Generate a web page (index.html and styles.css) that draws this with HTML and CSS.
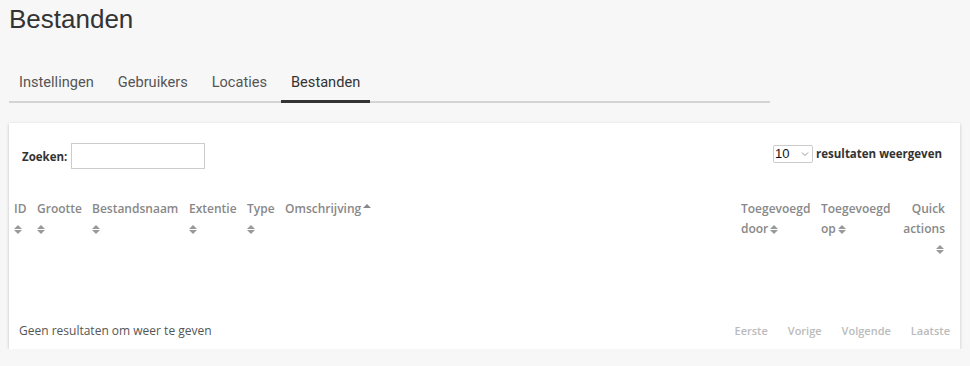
FILE: index.html
```html
<!DOCTYPE html>
<html lang="nl">
<head>
<meta charset="utf-8">
<title>Bestanden</title>
<link rel="stylesheet" href="styles.css">
</head>
<body>
<div class="page">
  <h1 class="title">Bestanden</h1>
  <nav class="tabs">
    <a class="tab">Instellingen</a>
    <a class="tab">Gebruikers</a>
    <a class="tab">Locaties</a>
    <a class="tab active">Bestanden</a>
  </nav>
  <section class="card">
    <div class="toolbar">
      <label class="search">Zoeken: <input type="text" class="search-input"></label>
      <label class="length">
        <span class="select"><span>10</span><svg class="chev" width="8" height="6" viewBox="0 0 8 6"><path d="M1 1.5 L4 4.5 L7 1.5" fill="none" stroke="#999" stroke-width="1"/></svg></span>
        resultaten weergeven
      </label>
    </div>
    <table class="grid">
      <thead>
        <tr>
          <th class="c-id">ID <span class="sort"></span></th>
          <th class="c-size">Grootte <span class="sort"></span></th>
          <th class="c-name">Bestandsnaam <span class="sort"></span></th>
          <th class="c-ext">Extentie <span class="sort"></span></th>
          <th class="c-type">Type <span class="sort"></span></th>
          <th class="c-desc">Omschrijving<span class="sort-up"></span></th>
          <th class="c-by">Toegevoegd door<span class="sort inline"></span></th>
          <th class="c-on">Toegevoegd op<span class="sort inline"></span></th>
          <th class="c-qa">Quick actions <span class="sort"></span></th>
        </tr>
      </thead>
    </table>
    <div class="footer">
      <span class="info">Geen resultaten om weer te geven</span>
      <div class="pager">
        <span>Eerste</span><span>Vorige</span><span>Volgende</span><span>Laatste</span>
      </div>
    </div>
  </section>
</div>
</body>
</html>
```

FILE: styles.css
```css
html, body {
  margin: 0;
  padding: 0;
  background: #f7f7f7;
}
body {
  font-family: "Open Sans", "Liberation Sans", sans-serif;
  color: #333;
}
.page {
  padding: 0 10px 0 9px;
}
.title {
  margin: 0;
  padding-top: 4px;
  font-family: "Liberation Sans", Arial, sans-serif;
  font-weight: 400;
  font-size: 26px;
  line-height: 30px;
  color: #333;
}
.tabs {
  margin-top: 34px;
  width: 761px;
  display: flex;
  border-bottom: 2px solid #d4d4d4;
  height: 33px;
}
.tab {
  font-family: "Roboto", "Open Sans", sans-serif;
  font-size: 14.6px;
  color: #555;
  padding: 4px 10px 0;
  margin-right: 4px;
  line-height: 20px;
  height: 28px;
  box-sizing: content-box;
}
.tab.active {
  color: #333;
  border-bottom: 3px solid #333;
  margin-bottom: -2px;
}
.card {
  margin-top: 20px;
  background: #fff;
  box-shadow: 0 1px 3px rgba(0,0,0,0.22);
  height: 226px;
  width: 951px;
  box-sizing: border-box;
  padding: 0 10px 0 5px;
  display: flex;
  flex-direction: column;
}
.toolbar {
  display: flex;
  justify-content: space-between;
  align-items: center;
  padding: 20px 8px 0 8px;
  font-size: 11.5px;
  font-weight: 700;
  color: #333;
}
.search {
  display: flex;
  align-items: center;
  gap: 4px;
}
.search-input {
  width: 134px;
  height: 26px;
  box-sizing: border-box;
  border: 1px solid #ccc;
  margin: 0;
  padding: 0;
}
.length {
  display: flex;
  align-items: center;
  gap: 3px;
  margin-top: -5px;
}
.select {
  width: 40px;
  height: 18px;
  box-sizing: border-box;
  border: 1px solid #ccc;
  border-radius: 2px;
  display: flex;
  align-items: center;
  justify-content: space-between;
  padding: 0 3px 0 1px;
  font-family: "Liberation Sans", Arial, sans-serif;
  font-weight: 400;
  font-size: 13px;
  color: #111;
}
.grid {
  margin-top: 30px;
  width: calc(100% - 5px);
  border-collapse: collapse;
  font-size: 12px;
}
.grid th {
  font-weight: 600;
  color: #888;
  text-align: left;
  vertical-align: top;
  line-height: 20px;
  padding: 0;
}
.c-id { width: 23px; }
.c-size { width: 55px; }
.c-name { width: 97px; }
.c-ext { width: 58px; }
.c-type { width: 38px; }
.c-desc { width: auto; }
.c-by { width: 80px; }
.c-on { width: 80px; }
.grid th.c-qa { width: 44px; text-align: right; }
.sort {
  display: inline-block;
  position: relative;
  width: 9px;
  height: 12px;
  vertical-align: middle;
}
.sort::before, .sort::after {
  content: "";
  position: absolute;
  left: 0;
  border-left: 4.5px solid transparent;
  border-right: 4.5px solid transparent;
}
.sort::before {
  top: 1px;
  border-bottom: 4px solid #999;
}
.sort::after {
  top: 6px;
  border-top: 4px solid #999;
}
.sort.inline { margin-left: 2px; }
.sort-up {
  display: inline-block;
  position: relative;
  width: 9px;
  height: 12px;
  margin-left: 2px;
  vertical-align: top;
}
.sort-up::before {
  content: "";
  position: absolute;
  left: 0;
  top: 5px;
  border-left: 4.5px solid transparent;
  border-right: 4.5px solid transparent;
  border-bottom: 4px solid #888;
}
.footer {
  margin-top: auto;
  display: flex;
  justify-content: space-between;
  align-items: center;
  padding: 0 0 10px 5px;
  font-size: 12px;
}
.info { color: #555; }
.pager {
  display: flex;
  gap: 20px;
  color: #bbb;
  font-weight: 600;
  font-size: 11px;
}
```
